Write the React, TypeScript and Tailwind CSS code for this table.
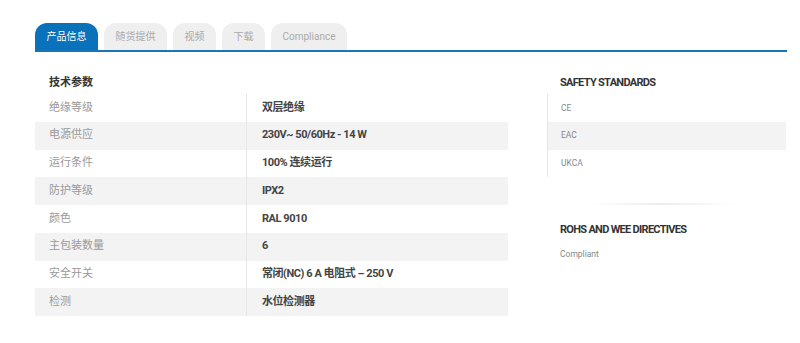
const specs = [
  { label: "绝缘等级", value: "双层绝缘" },
  { label: "电源供应", value: "230V~ 50/60Hz - 14 W" },
  { label: "运行条件", value: "100% 连续运行" },
  { label: "防护等级", value: "IPX2" },
  { label: "颜色", value: "RAL 9010" },
  { label: "主包装数量", value: "6" },
  { label: "安全开关", value: "常闭(NC) 6 A 电阻式 – 250 V" },
  { label: "检测", value: "水位检测器" },
]

const tabs = ["随货提供", "视频", "下载", "Compliance"]

const standards = ["CE", "EAC", "UKCA"]

const cjk = "font-['Roboto','Noto_Sans_CJK_SC',sans-serif]"

export default function App() {
  return (
    <div className={`w-[800px] h-[343px] bg-white ${cjk}`}>
      <div className="pt-[23px] pl-[35px] pr-[13px]">
        <div className="flex gap-[6px] border-b-2 border-[#1a74b8]">
          <div className="h-[27px] px-[11.5px] flex items-center rounded-t-[12px] bg-[#0a71bb] text-white text-[10px]">
            产品信息
          </div>
          {tabs.map((t) => (
            <div key={t} className="h-[27px] px-[11.5px] flex items-center rounded-t-[12px] bg-[#efefef] text-[#aaaaaa] text-[10px]">
              {t}
            </div>
          ))}
        </div>
      </div>

      <div className="flex pl-[35px] pt-[23px]">
        <div className="w-[473px]">
          <div className="pl-[14px] h-[16px] leading-[16px] mb-[3px] text-[11px] font-bold text-[#333]">技术参数</div>
          {specs.map((s, i) => (
            <div key={s.label} className={`flex h-[27.75px] items-center ${i % 2 === 1 ? "bg-[#f3f3f3]" : ""}`}>
              <div className="w-[212px] h-full flex items-center pl-[14px] text-[11px] text-[#9a9a9a] border-r border-[#e6e6e6]">
                {s.label}
              </div>
              <div className="pl-[15px] text-[11px] font-bold text-[#444] tracking-[-0.45px]">{s.value}</div>
            </div>
          ))}
        </div>

        <div className="ml-[39px] w-[239px]">
          <div className="pl-[13px] h-[16px] leading-[16px] mb-[3px] text-[11px] font-bold text-[#333] tracking-[-0.7px]">SAFETY STANDARDS</div>
          <div className="border-l border-[#e6e6e6]">
            {standards.map((s, i) => (
              <div key={s} className={`h-[27.75px] flex items-center pl-[13px] text-[8.5px] text-[#888] ${i % 2 === 1 ? "bg-[#f3f3f3]" : ""}`}>
                {s}
              </div>
            ))}
          </div>
          <div className="mt-[26px] ml-[40px] w-[150px] h-[2px] bg-gradient-to-r from-transparent via-[#ececec] to-transparent" />
          <div className="mt-[17px] pl-[13px] h-[16px] leading-[16px] text-[11px] font-bold text-[#333] tracking-[-0.7px]">ROHS AND WEE DIRECTIVES</div>
          <div className="mt-[10px] pl-[13px] text-[8.5px] text-[#888]">Compliant</div>
        </div>
      </div>
    </div>
  )
}
